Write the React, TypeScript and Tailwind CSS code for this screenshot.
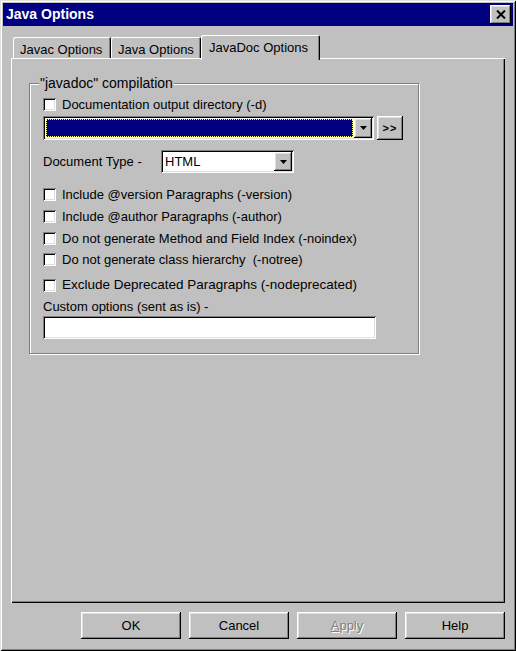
import React from "react";

const raised =
  "shadow-[inset_-1px_-1px_#000,inset_1px_1px_#fff,inset_-2px_-2px_#808080,inset_2px_2px_#dfdfdf]";
const sunken =
  "shadow-[inset_1px_1px_#808080,inset_-1px_-1px_#fff,inset_2px_2px_#000,inset_-2px_-2px_#dfdfdf]";

const DownArrow = () => (
  <svg width="7" height="4" viewBox="0 0 7 4">
    <path d="M0 0h7L3.5 4z" fill="#000" />
  </svg>
);

const DropButton = ({ h }: { h: string }) => (
  <div className={`w-[18px] ${h} bg-[#c0c0c0] flex items-center justify-center ${raised}`}>
    <DownArrow />
  </div>
);

const Check = ({ label, big }: { label: string; big?: boolean }) => (
  <div className="flex items-center h-[15px]">
    <div className={`w-[13px] h-[13px] bg-white ${sunken}`} />
    <span className={`ml-[6px] whitespace-pre ${big ? "text-[13.5px]" : ""}`}>{label}</span>
  </div>
);

interface Tab {
  label: string;
  width: string;
  active?: boolean;
}

const tabs: Tab[] = [
  { label: "Javac Options", width: "w-[98px]" },
  { label: "Java Options", width: "w-[90px]" },
  { label: "JavaDoc Options", width: "w-[119px]", active: true },
];

export default function App() {
  return (
    <div
      className="w-[516px] h-[651px] bg-[#c0c0c0] p-[3px] flex flex-col text-[13px] text-black shadow-[inset_1px_1px_#dfdfdf,inset_-1px_-1px_#000,inset_2px_2px_#fff,inset_-2px_-2px_#808080] overflow-hidden"
      style={{ fontFamily: '"Liberation Sans", Arial, sans-serif' }}
    >
      {/* Title bar */}
      <div className="h-[23px] bg-[#000080] flex items-start justify-between shrink-0">
        <span className="pl-[3px] pt-[2px] text-white font-bold text-[14px] leading-[18px]">
          Java Options
        </span>
        <div className={`mt-[2px] mr-[2px] w-[21px] h-[19px] bg-[#c0c0c0] flex items-center justify-center ${raised}`}>
          <svg width="10" height="9" viewBox="0 0 10 9">
            <path d="M1 0.5L9 8.5M9 0.5L1 8.5" stroke="#000" strokeWidth="2" />
          </svg>
        </div>
      </div>

      <div className="px-[8px] flex flex-col">
        {/* Tabs */}
        <div className="mt-[9px] ml-[2px] h-[23px] flex items-end">
          {tabs.map((t) =>
            t.active ? (
              <div
                key={t.label}
                className={`${t.width} h-[25px] -mb-[2px] relative z-10 bg-[#c0c0c0] rounded-t-[2px] flex items-start pt-[3px] pl-[8px] shadow-[inset_1px_1px_#fff,inset_-1px_0_#000,inset_-2px_0_#808080]`}
              >
                {t.label}
              </div>
            ) : (
              <div
                key={t.label}
                className={`${t.width} h-[21px] bg-[#c0c0c0] rounded-t-[2px] flex items-start pt-[3px] pl-[7px] shadow-[inset_1px_1px_#fff,inset_-1px_0_#000,inset_-2px_0_#808080]`}
              >
                {t.label}
              </div>
            )
          )}
        </div>

        {/* Panel */}
        <div className="h-[545px] shadow-[inset_1px_1px_#fff,inset_-1px_-1px_#000,inset_-2px_-2px_#808080] pt-[25px] pl-[18px]">
          <div className="relative w-[390px] h-[271px] border border-[#808080] shadow-[inset_1px_1px_#fff,1px_1px_#fff] pl-[13px] pt-[13px]">
            <span className="absolute -top-[9px] left-[9px] bg-[#c0c0c0] px-[1px] leading-[16px] text-[14px]">
              "javadoc" compilation
            </span>

            <Check label="Documentation output directory (-d)" />

            <div className="mt-[4px] flex items-center">
              <div className={`w-[331px] h-[24px] p-[2px] flex ${sunken} bg-white`}>
                <div className="flex-1 m-[1px] bg-[#000080] border border-dotted border-[#ffff80]" />
                <DropButton h="h-[20px]" />
              </div>
              <div className={`ml-[3px] w-[26px] h-[24px] flex items-center justify-center ${raised}`}>
                <span className="text-[11px] font-bold leading-none tracking-[1px]">&gt;&gt;</span>
              </div>
            </div>

            <div className="mt-[10px] h-[23px] flex items-center">
              <span className="w-[118px]">Document Type -</span>
              <div className={`w-[133px] h-[23px] p-[2px] flex bg-white ${sunken}`}>
                <span className="flex-1 pl-[2px] leading-[19px]">HTML</span>
                <DropButton h="h-[19px]" />
              </div>
            </div>

            <div className="mt-[14px]">
              <Check label="Include @version Paragraphs (-version)" />
            </div>
            <div className="mt-[7px]">
              <Check label="Include @author Paragraphs (-author)" />
            </div>
            <div className="mt-[7px]">
              <Check label="Do not generate Method and Field Index (-noindex)" />
            </div>
            <div className="mt-[6px]">
              <Check label="Do not generate class hierarchy  (-notree)" />
            </div>
            <div className="mt-[11px]">
              <Check label="Exclude Deprecated Paragraphs (-nodeprecated)" big />
            </div>

            <div className="mt-[6px] h-[15px] leading-[15px]">Custom options (sent as is) -</div>
            <div className={`mt-[2px] w-[333px] h-[23px] bg-white ${sunken}`} />
          </div>
        </div>

        {/* Buttons */}
        <div className="mt-[9px] flex justify-end gap-[8px]">
          {["OK", "Cancel", "Apply", "Help"].map((b) => (
            <div
              key={b}
              className={`w-[100px] h-[27px] flex items-center justify-center ${raised}`}
            >
              {b === "Apply" ? (
                <span className="text-[#808080] [text-shadow:1px_1px_0_#fff]">
                  <span className="underline">A</span>pply
                </span>
              ) : (
                b
              )}
            </div>
          ))}
        </div>
      </div>
    </div>
  );
}
